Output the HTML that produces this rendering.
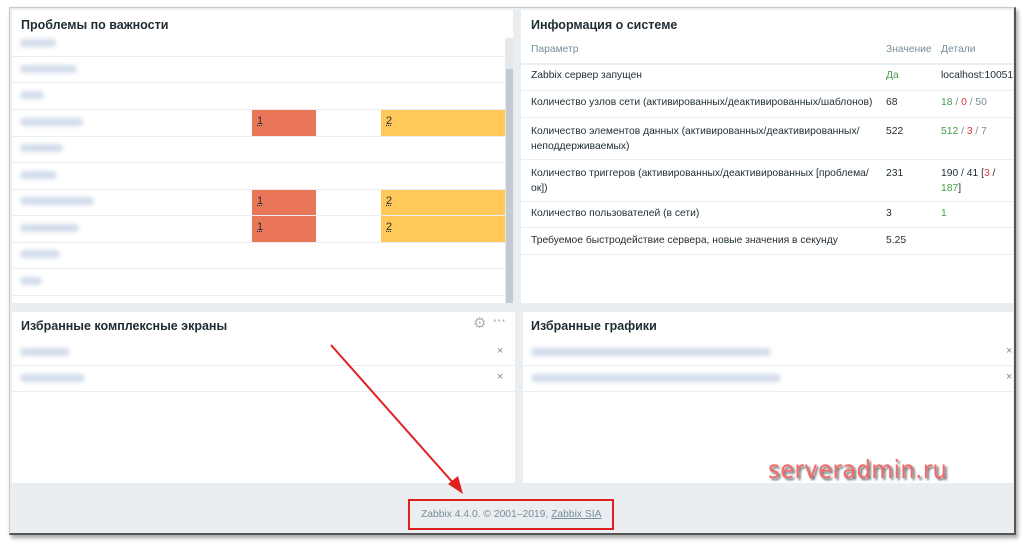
<!DOCTYPE html>
<html><head><meta charset="utf-8"><style>
*{margin:0;padding:0;box-sizing:border-box}
body{width:1024px;height:545px;background:#fff;position:relative;overflow:hidden;font-family:"Liberation Sans",sans-serif;color:#1f2c33}
.frame{position:absolute;left:9px;top:7px;width:1007px;height:528px;background:#ebeef0;border:1px solid #c8cbcd;border-right:2px solid #555;border-bottom:2px solid #555;box-shadow:2px 3px 4px rgba(0,0,0,.35)}
.p{position:absolute;background:#fff}
.t{position:absolute;font-size:12.5px;font-weight:bold;color:#1f2c33}
.a{position:absolute;font-size:10.3px;white-space:nowrap}
.l{position:absolute;height:1px;background:#ebeef0}
.b{position:absolute;height:8px;background:#d3ddec;border-radius:4px;filter:blur(2px)}
.c{position:absolute;font-size:11px;padding:5px 0 0 5px;text-decoration:underline dotted;color:#1f2c33}
.g{color:#429e47}.r{color:#e33734}.gr{color:#768d99}
</style></head><body>
<div class="frame"></div>
<div class="p" style="left:12px;top:10px;width:501px;height:293px"></div>
<div class="t" style="left:21px;top:18px">Проблемы по важности</div>
<div style="position:absolute;left:505px;top:38px;width:8px;height:265px;background:#e6e9eb"></div>
<div style="position:absolute;left:506px;top:69px;width:7px;height:234px;background:#c3cbd1"></div>
<div class="b" style="left:20px;top:39px;width:36px"></div>
<div class="b" style="left:20px;top:65px;width:57px"></div>
<div class="b" style="left:20px;top:91px;width:24px"></div>
<div class="b" style="left:20px;top:118px;width:63px"></div>
<div class="b" style="left:20px;top:144px;width:43px"></div>
<div class="b" style="left:20px;top:171px;width:37px"></div>
<div class="b" style="left:20px;top:197px;width:74px"></div>
<div class="b" style="left:20px;top:224px;width:59px"></div>
<div class="b" style="left:20px;top:250px;width:40px"></div>
<div class="b" style="left:20px;top:277px;width:22px"></div>
<div class="l" style="left:12px;top:56px;width:493px"></div>
<div class="l" style="left:12px;top:82px;width:493px"></div>
<div class="l" style="left:12px;top:109px;width:493px"></div>
<div class="l" style="left:12px;top:136px;width:493px"></div>
<div class="l" style="left:12px;top:162px;width:493px"></div>
<div class="l" style="left:12px;top:189px;width:493px"></div>
<div class="l" style="left:12px;top:215px;width:493px"></div>
<div class="l" style="left:12px;top:242px;width:493px"></div>
<div class="l" style="left:12px;top:268px;width:493px"></div>
<div class="l" style="left:12px;top:295px;width:493px"></div>
<div class="c" style="left:252px;top:110px;width:64px;height:26px;background:#e97659">1</div>
<div class="c" style="left:381px;top:110px;width:124px;height:26px;background:#ffc859">2</div>
<div class="c" style="left:252px;top:190px;width:64px;height:25px;background:#e97659">1</div>
<div class="c" style="left:381px;top:190px;width:124px;height:25px;background:#ffc859">2</div>
<div class="c" style="left:252px;top:216px;width:64px;height:26px;background:#e97659">1</div>
<div class="c" style="left:381px;top:216px;width:124px;height:26px;background:#ffc859">2</div>
<div class="p" style="left:521px;top:10px;width:492px;height:293px"></div>
<div class="t" style="left:531px;top:18px">Информация о системе</div>
<div class="a gr" style="left:531px;top:44px">Параметр</div>
<div class="a gr" style="left:886px;top:44px">Значение</div>
<div class="a gr" style="left:941px;top:44px">Детали</div>
<div class="l" style="left:521px;top:63px;width:492px;height:2px"></div>
<div class="a" style="left:531px;top:70px">Zabbix сервер запущен</div>
<div class="a g" style="left:886px;top:70px">Да</div>
<div class="a" style="left:941px;top:70px">localhost:10051</div>
<div class="l" style="left:521px;top:90px;width:492px"></div>
<div class="a" style="left:531px;top:97px">Количество узлов сети (активированных/деактивированных/шаблонов)</div>
<div class="a" style="left:886px;top:97px">68</div>
<div class="a" style="left:941px;top:97px"><span class="g">18</span> <span class="gr">/</span> <span class="r">0</span> <span class="gr">/ 50</span></div>
<div class="l" style="left:521px;top:117px;width:492px"></div>
<div class="a" style="left:531px;top:124px;line-height:15px">Количество элементов данных (активированных/деактивированных/<br>неподдерживаемых)</div>
<div class="a" style="left:886px;top:124px;line-height:15px">522</div>
<div class="a" style="left:941px;top:124px;line-height:15px"><span class="g">512</span> <span class="gr">/</span> <span class="r">3</span> <span class="gr">/ 7</span></div>
<div class="l" style="left:521px;top:159px;width:492px"></div>
<div class="a" style="left:531px;top:166px;line-height:15px">Количество триггеров (активированных/деактивированных [проблема/<br>ок])</div>
<div class="a" style="left:886px;top:166px;line-height:15px">231</div>
<div class="a" style="left:941px;top:166px;line-height:15px">190 / 41 [<span class="r">3</span> /<br><span class="g">187</span>]</div>
<div class="l" style="left:521px;top:201px;width:492px"></div>
<div class="a" style="left:531px;top:208px">Количество пользователей (в сети)</div>
<div class="a" style="left:886px;top:208px">3</div>
<div class="a g" style="left:941px;top:208px">1</div>
<div class="l" style="left:521px;top:227px;width:492px"></div>
<div class="a" style="left:531px;top:235px">Требуемое быстродействие сервера, новые значения в секунду</div>
<div class="a" style="left:886px;top:235px">5.25</div>
<div class="l" style="left:521px;top:254px;width:492px"></div>
<div class="p" style="left:12px;top:312px;width:503px;height:171px"></div>
<div class="t" style="left:21px;top:319px">Избранные комплексные экраны</div>
<div class="a" style="left:473px;top:314px;color:#aab5bb;font-size:15px">⚙</div>
<div class="a" style="left:493px;top:313px;color:#aab5bb;font-size:13px;font-weight:bold">···</div>
<div class="b" style="left:20px;top:348px;width:50px"></div>
<div class="b" style="left:20px;top:374px;width:65px"></div>
<div class="a" style="left:497px;top:345px;color:#888;font-size:11px">×</div>
<div class="a" style="left:497px;top:371px;color:#888;font-size:11px">×</div>
<div class="l" style="left:12px;top:365px;width:503px"></div>
<div class="l" style="left:12px;top:391px;width:503px"></div>
<div class="p" style="left:523px;top:312px;width:490px;height:171px"></div>
<div class="t" style="left:531px;top:319px">Избранные графики</div>
<div class="b" style="left:531px;top:348px;width:240px"></div>
<div class="b" style="left:531px;top:374px;width:250px"></div>
<div class="a" style="left:1006px;top:345px;color:#888;font-size:11px">×</div>
<div class="a" style="left:1006px;top:371px;color:#888;font-size:11px">×</div>
<div class="l" style="left:523px;top:365px;width:490px"></div>
<div class="l" style="left:523px;top:391px;width:490px"></div>
<div class="a" style="left:768px;top:455px;font-size:25px;color:#f26a6a;text-shadow:2px 2px 2px #666;letter-spacing:0.5px;font-family:'DejaVu Sans Condensed','Liberation Sans Narrow',sans-serif">serveradmin.ru</div>
<div class="a" style="left:421px;top:509px;color:#768d99;font-size:10.3px">Zabbix 4.4.0. © 2001–2019, <span style="text-decoration:underline">Zabbix SIA</span></div>
<div style="position:absolute;left:408px;top:499px;width:206px;height:31px;border:2px solid #e02020"></div>
<svg style="position:absolute;left:0;top:0" width="1024" height="545">
<line x1="331" y1="345" x2="455" y2="485" stroke="#e02020" stroke-width="2"/>
<polygon points="463,494 448,484 458,476" fill="#e02020"/>
</svg>
</body></html>
